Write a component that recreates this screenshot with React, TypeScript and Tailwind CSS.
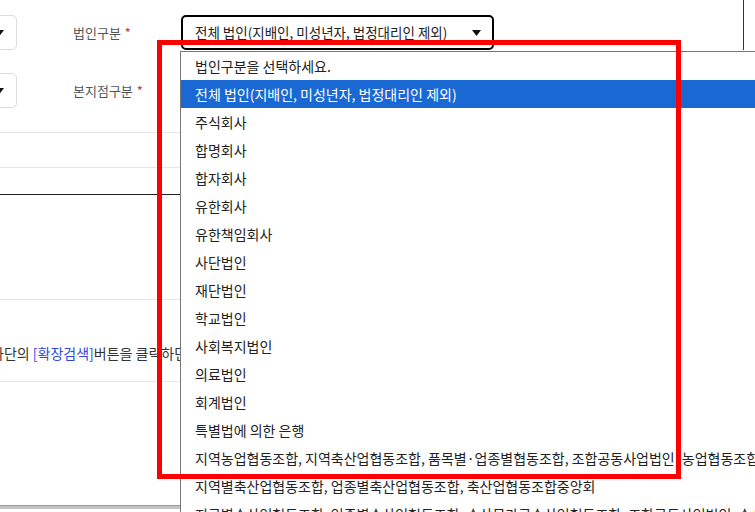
import React from 'react';

const options = [
  '법인구분을 선택하세요.',
  '전체 법인(지배인, 미성년자, 법정대리인 제외)',
  '주식회사',
  '합명회사',
  '합자회사',
  '유한회사',
  '유한책임회사',
  '사단법인',
  '재단법인',
  '학교법인',
  '사회복지법인',
  '의료법인',
  '회계법인',
  '특별법에 의한 은행',
  '지역농업협동조합, 지역축산업협동조합, 품목별·업종별협동조합, 조합공동사업법인, 농업협동조합중앙회',
  '지역별축산업협동조합, 업종별축산업협동조합, 축산업협동조합중앙회',
  '지구별수산업협동조합, 업종별수산업협동조합, 수산물가공수산업협동조합, 조합공동사업법인, 수산업협동조합중앙회',
];

const Caret = () => (
  <svg width="9" height="6" viewBox="0 0 9 6" className="shrink-0">
    <path d="M0 0 H9 L4.5 6 Z" fill="#111" />
  </svg>
);

const PartialSelect = () => (
  <div className="w-[60px] -ml-[43px] h-[35px] border border-[#dcdcdc] rounded-[5px] flex items-center justify-end pr-[12px]">
    <Caret />
  </div>
);

const Label = ({ text }: { text: string }) => (
  <div className="ml-[56px] w-[108px] text-[13px] text-[#555] whitespace-nowrap">
    {text} <span className="text-[#d9333f] ml-[1px]">*</span>
  </div>
);

export default function App() {
  return (
    <div className="relative w-[755px] h-[512px] overflow-hidden bg-white font-['Noto_Sans_CJK_KR','Noto_Sans',sans-serif] text-[#222]">
      {/* form rows */}
      <div className="flex h-[50px]">
        <div className="flex items-center self-end h-[35px]">
          <PartialSelect />
          <Label text="법인구분" />
          <div className="w-[313px] h-[35px] border-2 border-black rounded-[5px] pl-[12px] pr-[11px] flex items-center justify-between text-[13.5px] text-[#222]">
            <span className="whitespace-nowrap">전체 법인(지배인, 미성년자, 법정대리인 제외)</span>
            <Caret />
          </div>
        </div>
        <div className="ml-auto mr-[11px] w-px h-full bg-[#333]" />
      </div>

      <div className="flex items-center h-[35px] mt-[23px]">
        <PartialSelect />
        <Label text="본지점구분" />
      </div>

      <div className="mt-[24px] border-t border-[#e6e6e6] h-[35px]" />
      <div className="border-t border-[#e6e6e6] h-[27px]" />
      <div className="border-t border-[#222] h-[105px]" />
      <div className="border-t border-[#e6e6e6] h-[82px] flex items-end pb-[17px]">
        <p className="-ml-[9px] text-[14px] text-[#333] whitespace-nowrap">
          하단의 <span className="text-[#3346e0]">[확장검색]</span>버튼을 클릭하면
        </p>
      </div>
      <div className="border-t border-[#e6e6e6] h-[124px]" />
      <div className="h-[4px] w-[181px] bg-[#c4c4c4] border-t border-[#999]" />

      {/* open dropdown list */}
      <div className="absolute left-[180px] top-[51px] w-[640px] border-l border-t border-[#777] bg-white">
        {options.map((o, i) => (
          <div
            key={o}
            className={
              i === 1
                ? 'h-[28px] leading-[28px] pl-[14px] text-[14px] whitespace-nowrap bg-[#1a68d3] text-white'
                : 'h-[28px] leading-[28px] pl-[14px] text-[14px] whitespace-nowrap text-[#222]'
            }
          >
            {o}
          </div>
        ))}
      </div>

      {/* annotation */}
      <div className="absolute left-[157px] top-[40px] w-[524px] h-[439px] border-[5px] border-[#ff0000]" />
    </div>
  );
}
